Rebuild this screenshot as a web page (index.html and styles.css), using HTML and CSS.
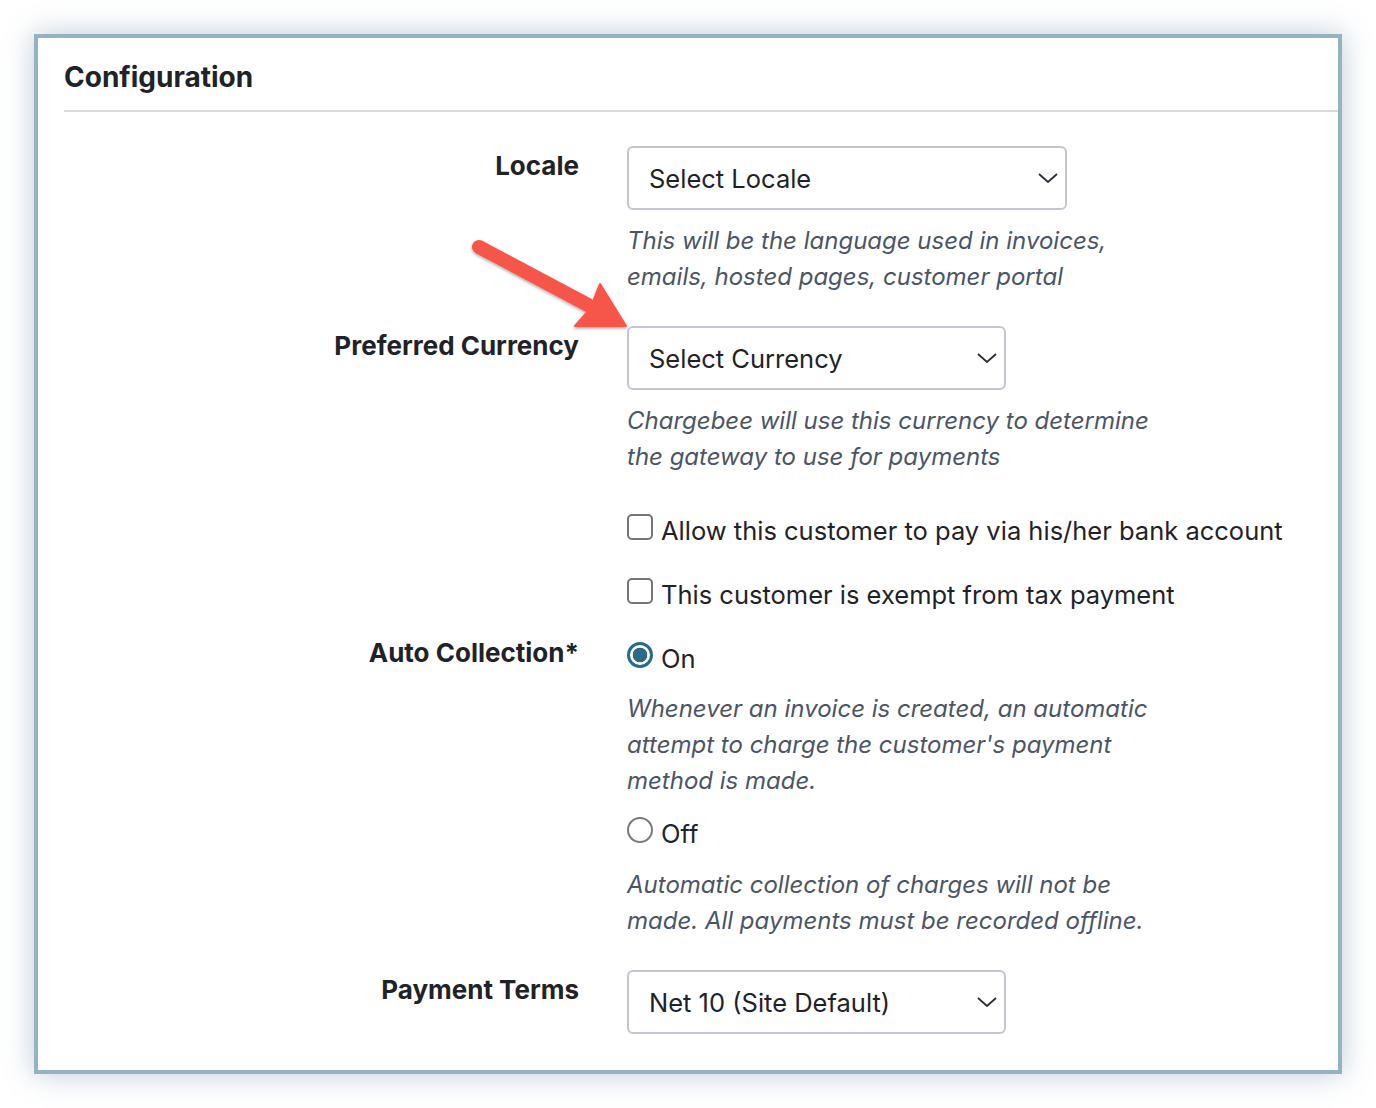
FILE: index.html
```html
<!DOCTYPE html>
<html lang="en">
<head>
    <meta charset="UTF-8">
    <meta name="viewport" content="width=device-width, initial-scale=1.0">
    <title>Configuration</title>
    <link rel="stylesheet" href="styles.css">
</head>
<body>
<section class="card">
    <h2 class="card-title">Configuration</h2>

    <div class="form">
        <div class="row">
            <label class="label">Locale</label>
            <div class="field">
                <div class="select select-wide">
                    <span>Select Locale</span>
                    <svg class="chevron" viewBox="0 0 20 10"><path d="M1 1 L10 9 L19 1"/></svg>
                </div>
                <p class="help">This will be the language used in invoices,<br>emails, hosted pages, customer portal</p>
            </div>
        </div>

        <div class="row row-currency">
            <label class="label">Preferred Currency</label>
            <div class="field">
                <div class="select">
                    <span>Select Currency</span>
                    <svg class="chevron" viewBox="0 0 20 10"><path d="M1 1 L10 9 L19 1"/></svg>
                </div>
                <p class="help">Chargebee will use this currency to determine<br>the gateway to use for payments</p>
            </div>
        </div>

        <div class="row row-checks">
            <div class="label"></div>
            <div class="field">
                <div class="option">
                    <span class="checkbox"></span>
                    <span>Allow this customer to pay via his/her bank account</span>
                </div>
                <div class="option option-next">
                    <span class="checkbox"></span>
                    <span>This customer is exempt from tax payment</span>
                </div>
            </div>
        </div>

        <div class="row row-auto">
            <label class="label">Auto Collection*</label>
            <div class="field field-radios">
                <div class="option">
                    <span class="radio checked"></span>
                    <span>On</span>
                </div>
                <p class="help help-radio">Whenever an invoice is created, an automatic<br>attempt to charge the customer's payment<br>method is made.</p>
                <div class="option option-off">
                    <span class="radio"></span>
                    <span>Off</span>
                </div>
                <p class="help help-radio help-off">Automatic collection of charges will not be<br>made. All payments must be recorded offline.</p>
            </div>
        </div>

        <div class="row row-terms">
            <label class="label">Payment Terms</label>
            <div class="field">
                <div class="select">
                    <span>Net 10 (Site Default)</span>
                    <svg class="chevron" viewBox="0 0 20 10"><path d="M1 1 L10 9 L19 1"/></svg>
                </div>
            </div>
        </div>
    </div>

    <!-- callout arrow pointing at the currency select -->
    <svg class="callout" width="180" height="120" viewBox="0 0 180 120">
        <defs>
            <filter id="arrow-shadow" x="-20%" y="-20%" width="140%" height="140%">
                <feDropShadow dx="0" dy="1.5" stdDeviation="1.5" flood-color="#000" flood-opacity="0.35"/>
            </filter>
        </defs>
        <g filter="url(#arrow-shadow)" fill="#f6574a" stroke="#f6574a">
            <line x1="19" y1="22" x2="128" y2="80" stroke-width="14" stroke-linecap="round"/>
            <polygon points="166,101 115,101 130,84 140,59" stroke-width="2" stroke-linejoin="round"/>
        </g>
    </svg>
</section>
</body>
</html>
```

FILE: styles.css
```css
body{
    margin: 0;
    padding: 34px;
    background-color: #fff;
    font-family: Inter, "Noto Sans", sans-serif;
    color: #1f2328;
}

.card{
    position: relative;
    width: 1300px;
    height: 1032px;
    border: 4px solid #94b2c2;
    background-color: #fff;
    box-shadow: 0 0 28px rgba(70, 110, 140, .35);
}

.card-title{
    margin: 0 0 0 26px;
    padding: 22px 0 16px;
    font-size: 28px;
    line-height: 34px;
    font-weight: 700;
    border-bottom: 2px solid #d7dadd;
}

.form{
    padding: 34px 0 0 26px;
}

.row{
    display: grid;
    grid-template-columns: 515px 1fr;
    column-gap: 48px;
}

.label{
    padding-top: 4px;
    text-align: right;
    font-size: 26px;
    line-height: 32px;
    font-weight: 700;
}

.row-currency{ margin-top: 31px; }
.row-checks{ margin-top: 38px; }
.row-auto{ margin-top: 20px; }
.row-terms{ margin-top: 31px; }

.select{
    box-sizing: border-box;
    width: 379px;
    height: 64px;
    display: flex;
    align-items: center;
    justify-content: space-between;
    padding: 0 7px 0 20px;
    border: 2px solid #c4c5d0;
    border-radius: 6px;
    font-size: 25.5px;
}
.select-wide{
    width: 440px;
}

.chevron{
    width: 20px;
    height: 10px;
    fill: none;
    stroke: #2a2d33;
    stroke-width: 1.8;
}

.help{
    margin: 13px 0 0;
    font-size: 24px;
    line-height: 36px;
    font-style: italic;
    color: #4b5565;
}

.option{
    display: flex;
    align-items: center;
    gap: 8px;
    font-size: 25.5px;
    line-height: 36px;
}
.option-next{
    margin-top: 28px;
}

.checkbox{
    box-sizing: border-box;
    width: 26px;
    height: 26px;
    margin-bottom: 8px;
    border: 2px solid #757575;
    border-radius: 5px;
}

.field-radios{
    padding-top: 8px;
}
.radio{
    box-sizing: border-box;
    width: 26px;
    height: 26px;
    margin-bottom: 8px;
    border: 2px solid #7a7a7a;
    border-radius: 50%;
}
.radio.checked{
    border: 3px solid #2b6a8b;
    background: radial-gradient(circle, #2b6a8b 0 7px, #fff 7.6px);
}
.help-radio{
    margin-top: 14px;
}
.option-off{
    margin-top: 17px;
}
.help-off{
    margin-top: 15px;
}

.callout{
    position: absolute;
    left: 422px;
    top: 187px;
}
```
